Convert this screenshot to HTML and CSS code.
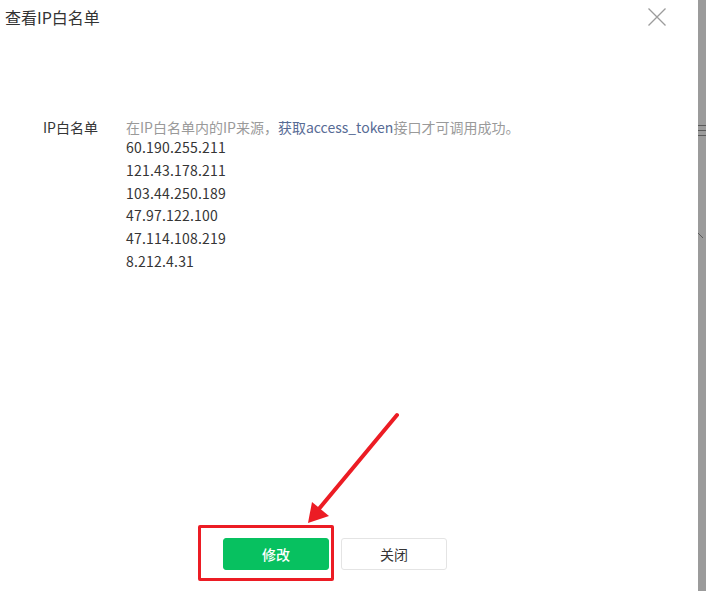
FILE: index.html
```html
<!DOCTYPE html>
<html lang="zh-CN">
<head>
    <meta charset="UTF-8">
    <meta name="viewport" content="width=device-width, initial-scale=1.0">
    <title>查看IP白名单</title>
    <link rel="stylesheet" href="styles.css">
</head>
<body>
    <div class="page">
        <!-- Dialog -->
        <div class="dialog">
            <div class="dialog-header">
                <span class="dialog-title">查看IP白名单</span>
                <span class="dialog-close">
                    <svg width="18" height="18" viewBox="0 0 18 18">
                        <path d="M0.5 0.5 L17.5 17.5 M17.5 0.5 L0.5 17.5" stroke="#9c9c9c" stroke-width="1.3" fill="none"/>
                    </svg>
                </span>
            </div>

            <div class="dialog-body">
                <div class="form-row">
                    <div class="form-label">IP白名单</div>
                    <div class="form-content">
                        <div class="form-tips">在IP白名单内的IP来源，<a class="tips-link">获取access_token</a>接口才可调用成功。</div>
                        <ul class="ip-list">
                            <li>60.190.255.211</li>
                            <li>121.43.178.211</li>
                            <li>103.44.250.189</li>
                            <li>47.97.122.100</li>
                            <li>47.114.108.219</li>
                            <li>8.212.4.31</li>
                        </ul>
                    </div>
                </div>
            </div>

            <div class="dialog-footer">
                <button class="btn btn-primary">修改</button>
                <button class="btn btn-default">关闭</button>
            </div>

            <!-- annotation over the footer -->
            <div class="mark-box"></div>
            <svg class="mark-arrow" width="706" height="591" viewBox="0 0 706 591">
                <line x1="397" y1="415" x2="318" y2="510" stroke="#ec1c24" stroke-width="4" stroke-linecap="round"/>
                <polygon points="308,523 312,502 329,516" fill="#ec1c24"/>
            </svg>
        </div>

        <!-- masked page behind the dialog -->
        <div class="backdrop">
            <div class="backdrop-mark one">
                <i></i><i></i><i></i>
            </div>
            <svg class="backdrop-mark two" width="8" height="8" viewBox="0 0 8 8">
                <path d="M0 1 L5 6" stroke="#5a5a5a" stroke-width="1" fill="none"/>
            </svg>
        </div>
    </div>
</body>
</html>
```

FILE: styles.css
```css
body {
    margin: 0;
    padding: 0;
    font-family: "Noto Sans CJK SC", "Liberation Sans", sans-serif;
    color: #353535;
    background: #fff;
    overflow: hidden;
}
.page {
    display: flex;
    width: 706px;
    height: 591px;
}
.dialog {
    position: relative;
    width: 698px;
    height: 591px;
    background: #fff;
    display: flex;
    flex-direction: column;
}
.dialog-header {
    display: flex;
    justify-content: space-between;
    align-items: flex-start;
    padding: 5px 32px 0 5px;
}
.dialog-title {
    font-size: 16px;
    line-height: 24px;
    color: #333;
}
.dialog-close {
    display: block;
    margin-top: 2px;
    height: 18px;
}
.dialog-body {
    padding: 88px 0 0 43px;
}
.form-row {
    display: flex;
}
.form-label {
    width: 83px;
    font-size: 14px;
    line-height: 20px;
    color: #353535;
}
.form-content {
    font-size: 14px;
}
.form-tips {
    line-height: 20px;
    color: #9a9a9a;
}
.tips-link {
    color: #576b95;
    text-decoration: none;
}
.ip-list {
    list-style: none;
    margin: -1px 0 0 0;
    padding: 0;
    line-height: 22.8px;
    color: #353535;
    letter-spacing: 0.2px;
}
.dialog-footer {
    margin-top: auto;
    display: flex;
    gap: 12px;
    padding: 0 0 21px 223px;
}
.btn {
    width: 106px;
    height: 32px;
    border-radius: 3px;
    font-family: inherit;
    font-size: 14px;
    cursor: pointer;
}
.btn-primary {
    background: #07c160;
    border: 1px solid #07c160;
    color: #fff;
    font-weight: 500;
}
.btn-default {
    background: #fff;
    border: 1px solid #e4e4e4;
    color: #353535;
}
.mark-box {
    position: absolute;
    left: 198px;
    top: 525px;
    width: 130px;
    height: 50px;
    border: 3px solid #ec1c24;
    border-radius: 2px;
}
.mark-arrow {
    position: absolute;
    left: 0;
    top: 0;
    pointer-events: none;
}
.backdrop {
    flex: 1;
    background: #9b9b9b;
    overflow: hidden;
}
.backdrop-mark {
    display: block;
}
.backdrop-mark.one {
    margin-top: 125px;
    display: flex;
    flex-direction: column;
    gap: 4px;
}
.backdrop-mark.one i {
    display: block;
    height: 1px;
    background: #5a5a5a;
}
.backdrop-mark.two {
    margin-top: 96px;
}
```
